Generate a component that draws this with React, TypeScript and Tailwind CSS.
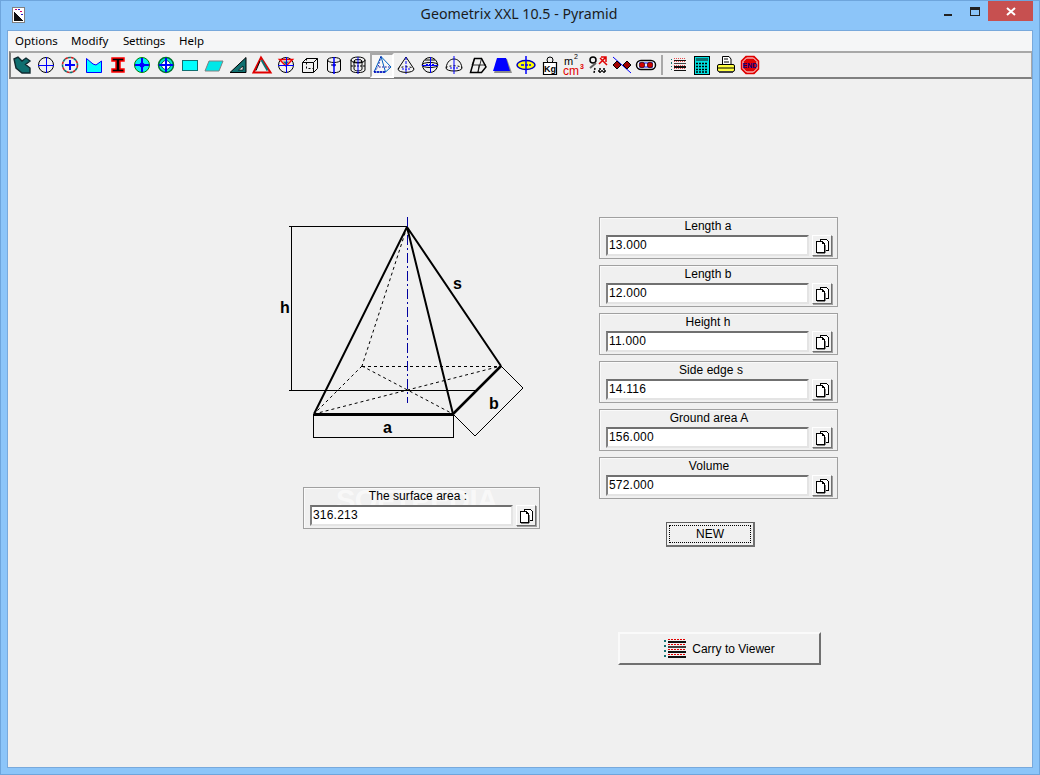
import React from "react";

const S = ({ children, active }: { children: React.ReactNode; active?: boolean }) => (
  <div className={active ? "w-6 h-[25px] shrink-0 bg-[#f7f7f7] border-t-2 border-l-2 border-t-[#a8a8a8] border-l-[#a8a8a8] border-r-2 border-b-2 border-r-white border-b-white" : "w-6 h-[25px] shrink-0 flex items-center justify-center"}>
    <svg width={active ? 20 : 24} height={active ? 21 : 24} viewBox={active ? "2 2 20 21" : "0 0 24 24"} fill="none" className="block">
      {children}
    </svg>
  </div>
);

const Cross = ({ r = 7, w = 1, c = "#0000ff" }: { r?: number; w?: number; c?: string }) => (
  <g stroke={c} strokeWidth={w} shapeRendering="crispEdges">
    <path d={`M12 ${12 - r}V${12 + r}M${12 - r} 12H${12 + r}`} />
  </g>
);

const icons: React.ReactNode[] = [
  <S key="1"><path d="M4 6 8 4 12 8 16 5 20 8 15.5 11.5 20 15 20 20 12 20 6 15Z" fill="#0f6f70" stroke="#102a30" strokeWidth="1.4" /></S>,
  <S key="2"><circle cx="12" cy="12" r="7.5" stroke="#000" /><Cross r={8} /></S>,
  <S key="3"><circle cx="12" cy="12" r="7.5" stroke="#d02020" strokeWidth="1.6" strokeDasharray="3 3" /><circle cx="12" cy="12" r="7.5" stroke="#107070" strokeWidth="1.6" strokeDasharray="3 3" strokeDashoffset="3" /><Cross r={5} w={2} /></S>,
  <S key="4"><path d="M4.5 5.5 11 11 14 12 19.5 8V19.5H4.5Z" fill="#00ffff" stroke="#0000ff" strokeWidth="1" /></S>,
  <S key="5"><path d="M6 5H18V8H14V16H18V19H6V16H10V8H6Z" fill="#000" stroke="#ff0000" strokeWidth="1.5" /></S>,
  <S key="6"><circle cx="12" cy="12" r="7.5" fill="#00f0f0" stroke="#008000" strokeWidth="1" /><Cross r={7} w={2} /><circle cx="12" cy="12" r="2.5" fill="#0000ff" /></S>,
  <S key="7"><circle cx="12" cy="12" r="7.5" fill="#00e8c8" stroke="#007030" strokeWidth="1.5" /><circle cx="12" cy="12" r="4.5" fill="#fff" stroke="#005050" /><Cross r={7} w={2} /></S>,
  <S key="8"><rect x="4.5" y="7.5" width="15" height="10" fill="#00ffff" stroke="#107070" strokeWidth="1" shapeRendering="crispEdges" /></S>,
  <S key="9"><path d="M7 8H21L17 18H3Z" fill="#00e8e8" stroke="#808080" strokeWidth="1" /></S>,
  <S key="10"><path d="M20 4.5V19.5H4Z" fill="#107070" stroke="#000" strokeWidth="1" /><path d="M17 13V17H12.5Z" fill="#eee" stroke="#000" strokeWidth=".7" /></S>,
  <S key="11"><path d="M11 4.5 20.5 19.5H3.5Z" fill="#f0f0f0" stroke="#e00000" strokeWidth="2" /><path d="M11.5 7 17.5 17.5" stroke="#107070" strokeWidth="2" /><path d="M10 8 6 17.5" stroke="#000" strokeWidth="1" /></S>,
  <S key="12"><circle cx="12" cy="12" r="7.5" stroke="#000" /><path d="M5.5 6.5H18.5L12 13Z" stroke="#f00000" strokeWidth="1.5" /><path d="M9 8.5H15L12 12Z" fill="#107070" /><Cross r={8} /></S>,
  <S key="13"><path d="M4.5 9.5H15.5V19.5H4.5ZM4.5 9.5 8.5 5.5H19.5V15.5L15.5 19.5M15.5 9.5 19.5 5.5" stroke="#000" /><path d="M8.5 5.5V15.5H15.5" stroke="#000" strokeDasharray="2 2" /></S>,
  <S key="14"><ellipse cx="12" cy="7" rx="6.5" ry="2.5" stroke="#000" /><path d="M5.5 7V17C5.5 20.5 18.5 20.5 18.5 17V7" stroke="#000" /><path d="M12 4V21" stroke="#0000ff" strokeWidth="1.5" /><path d="M9 12H15" stroke="#000" strokeDasharray="2 1" /><circle cx="12" cy="12" r="1.5" fill="#0000ff" /></S>,
  <S key="15"><ellipse cx="12" cy="7" rx="7" ry="3" stroke="#000" /><ellipse cx="12" cy="8" rx="4" ry="1.5" stroke="#000" /><path d="M5 7V17C5 20.5 19 20.5 19 17V7" stroke="#000" /><path d="M8 8V16C8 18.5 16 18.5 16 16V8" stroke="#000" /><path d="M5 13H19" stroke="#000" strokeDasharray="2 1" /><path d="M12 4V21" stroke="#0000ff" /></S>,
  <S key="16" active><path d="M11 3.5 4 19H15.5L21 14Z" stroke="#0060c0" strokeWidth="1" /><path d="M11 3.5 15.5 19" stroke="#0060c0" /><path d="M11 3.5 8 14H21M4 19 8 14" stroke="#0000a0" strokeDasharray="1.5 1.5" /><path d="M4 19H15.5" stroke="#0000c0" strokeWidth="1.5" strokeDasharray="2 1" /></S>,
  <S key="17"><path d="M12 4 4 16C4 20.5 20 20.5 20 16Z" stroke="#000" /><path d="M4 16C6 13 18 13 20 16" stroke="#000" strokeDasharray="2 2" /><path d="M12 4V21" stroke="#0000ff" strokeDasharray="3 1" /><path d="M8 16H16" stroke="#0000ff" strokeDasharray="2 1" /></S>,
  <S key="18"><circle cx="12" cy="12" r="7.5" stroke="#000" /><ellipse cx="12" cy="12" rx="8" ry="2.5" stroke="#000" /><path d="M7 7H17" stroke="#000" /><Cross r={8} /><path d="M8 12H16" stroke="#0000ff" strokeWidth="2" strokeDasharray="2 1" /></S>,
  <S key="19"><path d="M4 15C5 8 9 6 12 6C15 6 19 8 20 15C20 19 4 19 4 15Z" stroke="#000" /><path d="M4 15C6 12 18 12 20 15" stroke="#000" strokeDasharray="2 2" /><path d="M12 3V21" stroke="#0000ff" /><path d="M8 15H16" stroke="#0000ff" strokeDasharray="2 1" /></S>,
  <S key="20"><path d="M8.5 5.5H15.5L20 14 15.5 19.5H4.5Z" stroke="#000" strokeWidth="1.5" /><path d="M8.5 5.5 6 12H13L12 19M13 12H20M15.5 5.5 12 19" stroke="#000" strokeWidth=".8" /></S>,
  <S key="21"><path d="M8 6H17L22 20H4Z" fill="#8c8c8c" /><path d="M7 5H16L20 18H3Z" fill="#0000ff" /></S>,
  <S key="22"><ellipse cx="12" cy="12" rx="9" ry="4.5" fill="#ffff00" stroke="#0000c0" strokeWidth="1.5" /><path d="M12 3V21" stroke="#0000ff" strokeWidth="1.5" /><path d="M7 12H17" stroke="#0000ff" strokeWidth="1.5" strokeDasharray="3 1" /></S>,
  <S key="23"><circle cx="12" cy="7" r="3" stroke="#000" /><path d="M5.5 9.5H18.5V21.5H5.5Z" stroke="#000" strokeWidth="1.2" fill="#fff" /><text x="12" y="19" textAnchor="middle" fontSize="9" fontFamily="Liberation Sans" fontWeight="700" fill="#000">Kg</text></S>,
  <S key="24"><text x="2" y="12" fontSize="11" fontFamily="Liberation Sans" fill="#000">m</text><text x="12" y="6" fontSize="7" fontFamily="Liberation Sans" fill="#000">2</text><text x="1" y="22" fontSize="12" fontFamily="Liberation Sans" fill="#e00000">cm</text><text x="18" y="16" fontSize="7" fontWeight="700" fontFamily="Liberation Sans" fill="#e00000">3</text></S>,
  <S key="25"><circle cx="7" cy="7" r="3" stroke="#000" strokeWidth="1.5" /><path d="M10 10 4 15" stroke="#606060" strokeWidth="2" /><path d="M13 11 20 4M15 4H20V9M14 5 21 12" stroke="#e00000" strokeWidth="1.5" /><path d="M9 15 8 20M14 15V20M18 15V20M12 18H20" stroke="#000" strokeWidth="1.5" strokeDasharray="2 1" /></S>,
  <S key="26"><path d="M3 4 21 20" stroke="#0000ff" /><path d="M7 8 11 12 7 16 3 12Z" fill="#a00000" stroke="#000" /><path d="M17 8 21 12 17 16 13 12Z" fill="#a00000" stroke="#000" /></S>,
  <S key="27"><rect x="2.5" y="7.5" width="19" height="9" rx="4.5" fill="#fff" stroke="#000" strokeWidth="1.5" /><path d="M5 10H19M5 14H19" stroke="#0000ff" /><circle cx="8" cy="12" r="2.8" fill="#d00000" stroke="#000" strokeWidth=".6" /><circle cx="16" cy="12" r="2.8" fill="#d00000" stroke="#000" strokeWidth=".6" /></S>,
];

const Lines = ({ w, h }: { w: number; h: number }) => (
  <svg width={w} height={h} viewBox="0 0 22 22" fill="none" className="block" shapeRendering="crispEdges">
    {[1, 6, 11, 16].map((y, i) => (
      <g key={y}>
        <rect x="0" y={y + 1} width="2" height="2" fill="#107070" />
        <path d={`M4 ${y + 0.5}H21`} stroke="#e00000" strokeDasharray="2 1" />
        <rect x="4" y={y + 2} width="18" height="2" fill={i === 1 ? "#404040" : "#101010"} />
      </g>
    ))}
  </svg>
);

const tail: React.ReactNode[] = [
  <div key="l" className="w-6 h-[25px] shrink-0 flex items-center justify-center"><Lines w={15} h={16} /></div>,
  <S key="c"><rect x="4.5" y="3.5" width="15" height="18" fill="#00e0e0" stroke="#000" shapeRendering="crispEdges" /><rect x="6" y="5" width="12" height="3" fill="#107070" /><path d="M6 10.5H18M6 13.5H18M6 16.5H18M6 19H18" stroke="#000" strokeWidth="1.5" strokeDasharray="2 1" /></S>,
  <S key="p"><path d="M8.5 3.5H15L17 6V12H8.5Z" fill="#fff" stroke="#000" /><path d="M10 6H14M10 9H15" stroke="#000" /><rect x="3.5" y="11.5" width="17" height="7" rx="1.5" fill="#ffff40" stroke="#000" /><path d="M4 15H20" stroke="#000" /><rect x="5" y="18" width="14" height="2" fill="#404040" /></S>,
  <S key="e"><path d="M8 3.5H16L20.5 8V16L16 20.5H8L3.5 16V8Z" fill="#e00000" stroke="#e00000" strokeWidth="1.5" /><path d="M8.5 5H15.5L19 8.5V15.5L15.5 19H8.5L5 15.5V8.5Z" stroke="#fff" /><text x="12" y="14.7" textAnchor="middle" fontSize="7" fontWeight="700" fontFamily="Liberation Sans" fill="#000080">END</text></S>,
];

const CopyButton = () => (
  <div className="w-[20px] h-[21px] ml-[3px] shrink-0 flex items-center justify-center border border-t-white border-l-white border-r-[#707070] border-b-[#707070] shadow-[1px_1px_0_#a0a0a0]">
    <svg width="15" height="16" viewBox="0 0 15 16" fill="none" shapeRendering="crispEdges">
      <path d="M5.5 1.5H11.5L13.5 3.5V12.5H5.5Z" fill="#fff" stroke="#000" />
      <path d="M1.5 3.5H7.5L9.5 5.5V14.5H1.5Z" fill="#fff" stroke="#000" />
      <path d="M7.5 3.5V5.5H9.5" stroke="#000" />
      <path d="M2 15.5H10M10.5 7V15" stroke="#808080" />
    </svg>
  </div>
);

const Field = ({ label, value, className = "", labelClass = "w-[204px]" }: { label: string; value: string; className?: string; labelClass?: string }) => (
  <div className={`relative h-[42px] border border-[#a0a0a0] shadow-[inset_1px_1px_0_#fafafa] ${className}`}>
    <div className={`relative z-10 h-[17px] text-center text-[12px] leading-[17px] tracking-[0.05px] text-black ${labelClass}`}>{label}</div>
    <div className="relative z-10 flex items-start">
      <div className="w-[203px] shrink-0 h-[21px] bg-white border-2 border-t-[#707070] border-l-[#808080] border-r-[#e4e4e4] border-b-[#e4e4e4] pl-px text-[12px] leading-[17px] tracking-[0.2px] text-black">{value}</div>
      <CopyButton />
    </div>
  </div>
);

const Pyramid = () => (
  <svg width="270" height="240" viewBox="270 210 270 240" fill="none" className="block">
    <g shapeRendering="crispEdges" stroke="#000" strokeWidth="1">
      <path d="M289 226.5H407M291.5 226V390M289 390.5H477M313.5 414V438M453.5 414V438M313 437.5H454" />
      <path d="M453 414 475 436M501 366 523 388M475 436 523 388" />
    </g>
    <g stroke="#000" strokeWidth="1" strokeDasharray="3 3">
      <path d="M407 227 362 366M362 366.5H501M362 366 453 414M314 414 501 366M362 366 314 414" />
    </g>
    <path d="M407.5 217V403" stroke="#0000a0" strokeWidth="1" strokeDasharray="10 3 2 3" shapeRendering="crispEdges" />
    <path d="M407 227 314 414M407 227 453 414M407 227 501 366" stroke="#000" strokeWidth="2" />
    <path d="M453 414 501 366" stroke="#000" strokeWidth="2.5" />
    <path d="M314 414H453" stroke="#000" strokeWidth="3" shapeRendering="crispEdges" />
    <g fontFamily="Liberation Sans, sans-serif" fontWeight="700" fontSize="16" fill="#000">
      <text x="280" y="313">h</text>
      <text x="453" y="289">s</text>
      <text x="489" y="409">b</text>
      <text x="383" y="433">a</text>
    </g>
  </svg>
);

export default function App() {
  return (
    <div className="relative w-[1040px] h-[775px] bg-[#8cc5f9] border border-[#6ea5dc] flex flex-col overflow-hidden font-['Liberation_Sans',sans-serif]">
      <div className="h-[30px] shrink-0 relative flex justify-center pt-[3px] pr-[2px]">
        <span className="text-[14.2px] leading-[20px] text-[#1c1c1c] font-['Noto_Sans',sans-serif]">Geometrix XXL 10.5 - Pyramid</span>
        <svg className="absolute left-[10px] top-[5px]" width="16" height="18" viewBox="0 0 16 18" fill="none" shapeRendering="crispEdges">
          <rect x="1.5" y="1.5" width="12" height="15" fill="#fff" stroke="#808080" />
          <path d="M3 6 12 15H3Z" fill="#101010" />
          <path d="M4 3H6M9 5H11" stroke="#d00060" />
          <path d="M7 3H9M10 8H12" stroke="#2020d0" />
        </svg>
        <div className="absolute left-[943px] top-[13px] w-2 h-[2px] bg-[#222]" />
        <div className="absolute left-[969px] top-[6px] w-[10px] h-[9px] border border-t-[3px] border-[#222]" />
        <div className="absolute left-[987px] top-0 w-[45px] h-5 bg-[#c75050] flex items-center justify-center">
          <svg width="10" height="9" viewBox="0 0 10 9" stroke="#fff" strokeWidth="2"><path d="M1 1 9 8M9 1 1 8" /></svg>
        </div>
      </div>

      <div className="mx-[7px] w-[1024px] h-[736px] flex flex-col bg-[#f0f0f0] shadow-[0_0_0_1px_#78a9dc]">
        <div className="h-[20px] shrink-0 bg-[#f5f6f7] flex items-center pl-[7px] text-[11.5px] leading-[20px] text-black font-['Noto_Sans',sans-serif]">
          <span className="w-[56px]">Options</span>
          <span className="w-[52px]">Modify</span>
          <span className="w-[56px] tracking-[-0.2px]">Settings</span>
          <span>Help</span>
        </div>
        <div className="h-[28px] shrink-0 ml-px border-t-2 border-l-2 border-b-2 border-r border-t-[#a8a8a8] border-l-[#808080] border-b-[#808080] border-r-[#a8a8a8] flex items-center">
          <div className="-ml-px flex">{icons}</div>
          <div className="w-[2px] h-5 bg-[#a8a8a8] ml-[3px] mr-[3px] shrink-0" />
          <div className="flex">{tail}</div>
        </div>

        <div className="flex flex-1 min-h-0">
          <div className="ml-[262px] w-[270px] pt-[131px] shrink-0">
            <Pyramid />
            <Field label="The surface area :" value="316.213" className="ml-[33px] mt-[37px] w-[237px] pl-[6px]" labelClass="w-[216px]" />
          </div>
          <div className="ml-[59px] pt-[138px] flex flex-col">
            <div className="flex flex-col gap-[6px]">
              <Field label="Length a" value="13.000" className="w-[239px] pl-[6px]" />
              <Field label="Length b" value="12.000" className="w-[239px] pl-[6px]" />
              <Field label="Height h" value="11.000" className="w-[239px] pl-[6px]" />
              <Field label="Side edge s" value="14.116" className="w-[239px] pl-[6px]" labelClass="w-[210px]" />
              <Field label="Ground area A" value="156.000" className="w-[239px] pl-[6px]" labelClass="w-[206px]" />
              <Field label="Volume" value="572.000" className="w-[239px] pl-[6px]" labelClass="w-[206px]" />
            </div>
            <div className="mt-[23px] ml-[67px] w-[89px] h-[25px] border border-[#606060] border-r-2 border-b-2 border-r-[#707070] border-b-[#707070] p-[2px]">
              <div className="w-full h-full border border-dotted border-black flex items-center justify-center text-[12px] text-black">NEW</div>
            </div>
            <div className="mt-[85px] ml-[19px] w-[203px] h-[33px] border-2 border-t-[#fafafa] border-l-[#fafafa] border-r-[#707070] border-b-[#707070] flex items-center justify-center gap-[6px] text-[12px] text-black">
              <Lines w={22} h={22} />
              <span>Carry to Viewer</span>
            </div>
          </div>
        </div>
      </div>

      <div className="absolute left-[335px] top-[483px] text-[29px] leading-[32px] font-bold tracking-[-0.5px] text-white/60 pointer-events-none">SOFTPEDIA</div>
    </div>
  );
}
